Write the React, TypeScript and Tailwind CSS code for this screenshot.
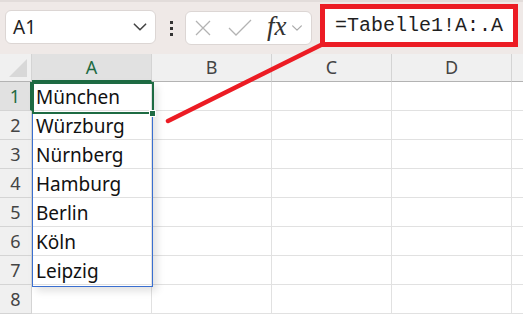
import React from "react";

const cities = ["München", "Würzburg", "Nürnberg", "Hamburg", "Berlin", "Köln", "Leipzig", ""];
const cols = ["A", "B", "C", "D"];

const ChevronDown = ({ size = 16, className = "" }: { size?: number; className?: string }) => (
  <svg width={size} height={size} viewBox="0 0 16 16" className={className} fill="none">
    <path d="M3 5.5 L8 10.5 L13 5.5" stroke="currentColor" strokeWidth="1.4" strokeLinecap="round" strokeLinejoin="round" />
  </svg>
);

export default function App() {
  return (
    <div className="relative w-[523px] h-[315px] overflow-hidden bg-white" style={{ fontFamily: '"Noto Sans", "Open Sans", sans-serif' }}>
      {/* toolbar */}
      <div className="h-[54px] bg-[#efe9e7] border-t-2 border-[#e2dcda] flex items-start">
        <div className="ml-[5px] mt-[8px] w-[151px] h-[34px] bg-white rounded-[6px] border border-[#dcd6d4] flex items-center justify-between pl-[7px] pr-[6px]">
          <span className="text-[19px] text-[#1f1f1f] leading-none">A1</span>
          <ChevronDown size={18} className="text-[#444]" />
        </div>
        <div className="ml-[14px] mt-[19px] flex flex-col gap-[3px]">
          <div className="w-[3px] h-[3px] bg-[#333]" />
          <div className="w-[3px] h-[3px] bg-[#333]" />
          <div className="w-[3px] h-[3px] bg-[#333]" />
        </div>
        <div className="ml-[12px] mt-[9px] w-[127px] h-[34px] bg-white rounded-[6px] border border-[#dcd6d4] flex items-center pl-[8px]">
          <svg width="18" height="18" viewBox="0 0 18 18" fill="none">
            <path d="M2 2 L16 16 M16 2 L2 16" stroke="#b3b3b3" strokeWidth="1.3" />
          </svg>
          <svg width="24" height="18" viewBox="0 0 24 18" fill="none" className="ml-[16px]">
            <path d="M1 9 L8 16 L23 1" stroke="#b3b3b3" strokeWidth="1.3" />
          </svg>
          <span className="ml-[15px] text-[27px] italic leading-none text-[#333] -mt-[4px]" style={{ fontFamily: '"Liberation Serif", serif' }}>fx</span>
          <ChevronDown size={14} className="ml-[3px] text-[#aaa]" />
        </div>
        <div className="ml-[8px] mt-[2px] w-[198px] h-[43px] bg-white border-[5px] border-[#ec1c24] flex items-center pl-[10px]">
          <span className="text-[20px] text-[#1f1f1f] leading-none" style={{ fontFamily: '"Liberation Mono", "DejaVu Sans Mono", monospace' }}>=Tabelle1!A:.A</span>
        </div>
      </div>

      {/* grid */}
      <div className="grid grid-cols-[32px_120px_120px_120px_120px_1fr] grid-rows-[28px_repeat(8,29px)]">
        <div className="bg-[#f0f0f0] border-b border-[#b3b3b3] border-r border-r-[#d4d4d4] relative">
          <div className="absolute right-[4px] bottom-[4px] w-0 h-0 border-l-[18px] border-l-transparent border-b-[18px] border-b-[#d8d8d8]" />
        </div>
        {cols.map((c, i) => (
          <div
            key={c}
            className={
              i === 0
                ? "bg-[#e1e1e1] border-b-2 border-[#1e6b43] border-r border-r-[#d4d4d4] flex items-center justify-center text-[18px] text-[#1e6b43]"
                : "bg-[#f0f0f0] border-b border-[#b3b3b3] border-r border-r-[#d4d4d4] flex items-center justify-center text-[18px] text-[#444]"
            }
          >
            {c}
          </div>
        ))}
        <div className="bg-[#f0f0f0] border-b border-[#b3b3b3]" />
        {cities.map((city, r) => (
          <React.Fragment key={r}>
            <div
              className={
                r === 0
                  ? "bg-[#e1e1e1] border-b border-[#d4d4d4] border-r-2 border-r-[#1e6b43] flex items-center justify-center text-[18px] text-[#1e6b43]"
                  : "bg-[#f0f0f0] border-b border-[#d4d4d4] border-r border-r-[#d4d4d4] flex items-center justify-center text-[18px] text-[#444]"
              }
            >
              {r + 1}
            </div>
            <div className="border-b border-r border-[#e1e1e1] flex items-center pl-[4px] pt-[2px] text-[19px] text-[#111]">{city}</div>
            <div className="border-b border-r border-[#e1e1e1]" />
            <div className="border-b border-r border-[#e1e1e1]" />
            <div className="border-b border-r border-[#e1e1e1]" />
            <div className="border-b border-[#e1e1e1]" />
          </React.Fragment>
        ))}
      </div>

      {/* spill range and active cell */}
      <div className="absolute left-[32px] top-[82px] w-[121px] h-[205px] border border-[#3a6fd0] shadow-[4px_4px_8px_rgba(0,0,0,0.12)] pointer-events-none" />
      <div className="absolute left-[32px] top-[82px] w-[122px] h-[32px] border-2 border-[#1e6b43] pointer-events-none" />
      <div className="absolute left-[149px] top-[110px] w-[7px] h-[7px] bg-[#1e6b43] border border-white pointer-events-none" />

      {/* annotation arrow */}
      <svg className="absolute left-0 top-0 pointer-events-none" width="523" height="315">
        <line x1="168" y1="121" x2="323" y2="44" stroke="#ec1c24" strokeWidth="4.5" strokeLinecap="round" />
      </svg>
    </div>
  );
}
